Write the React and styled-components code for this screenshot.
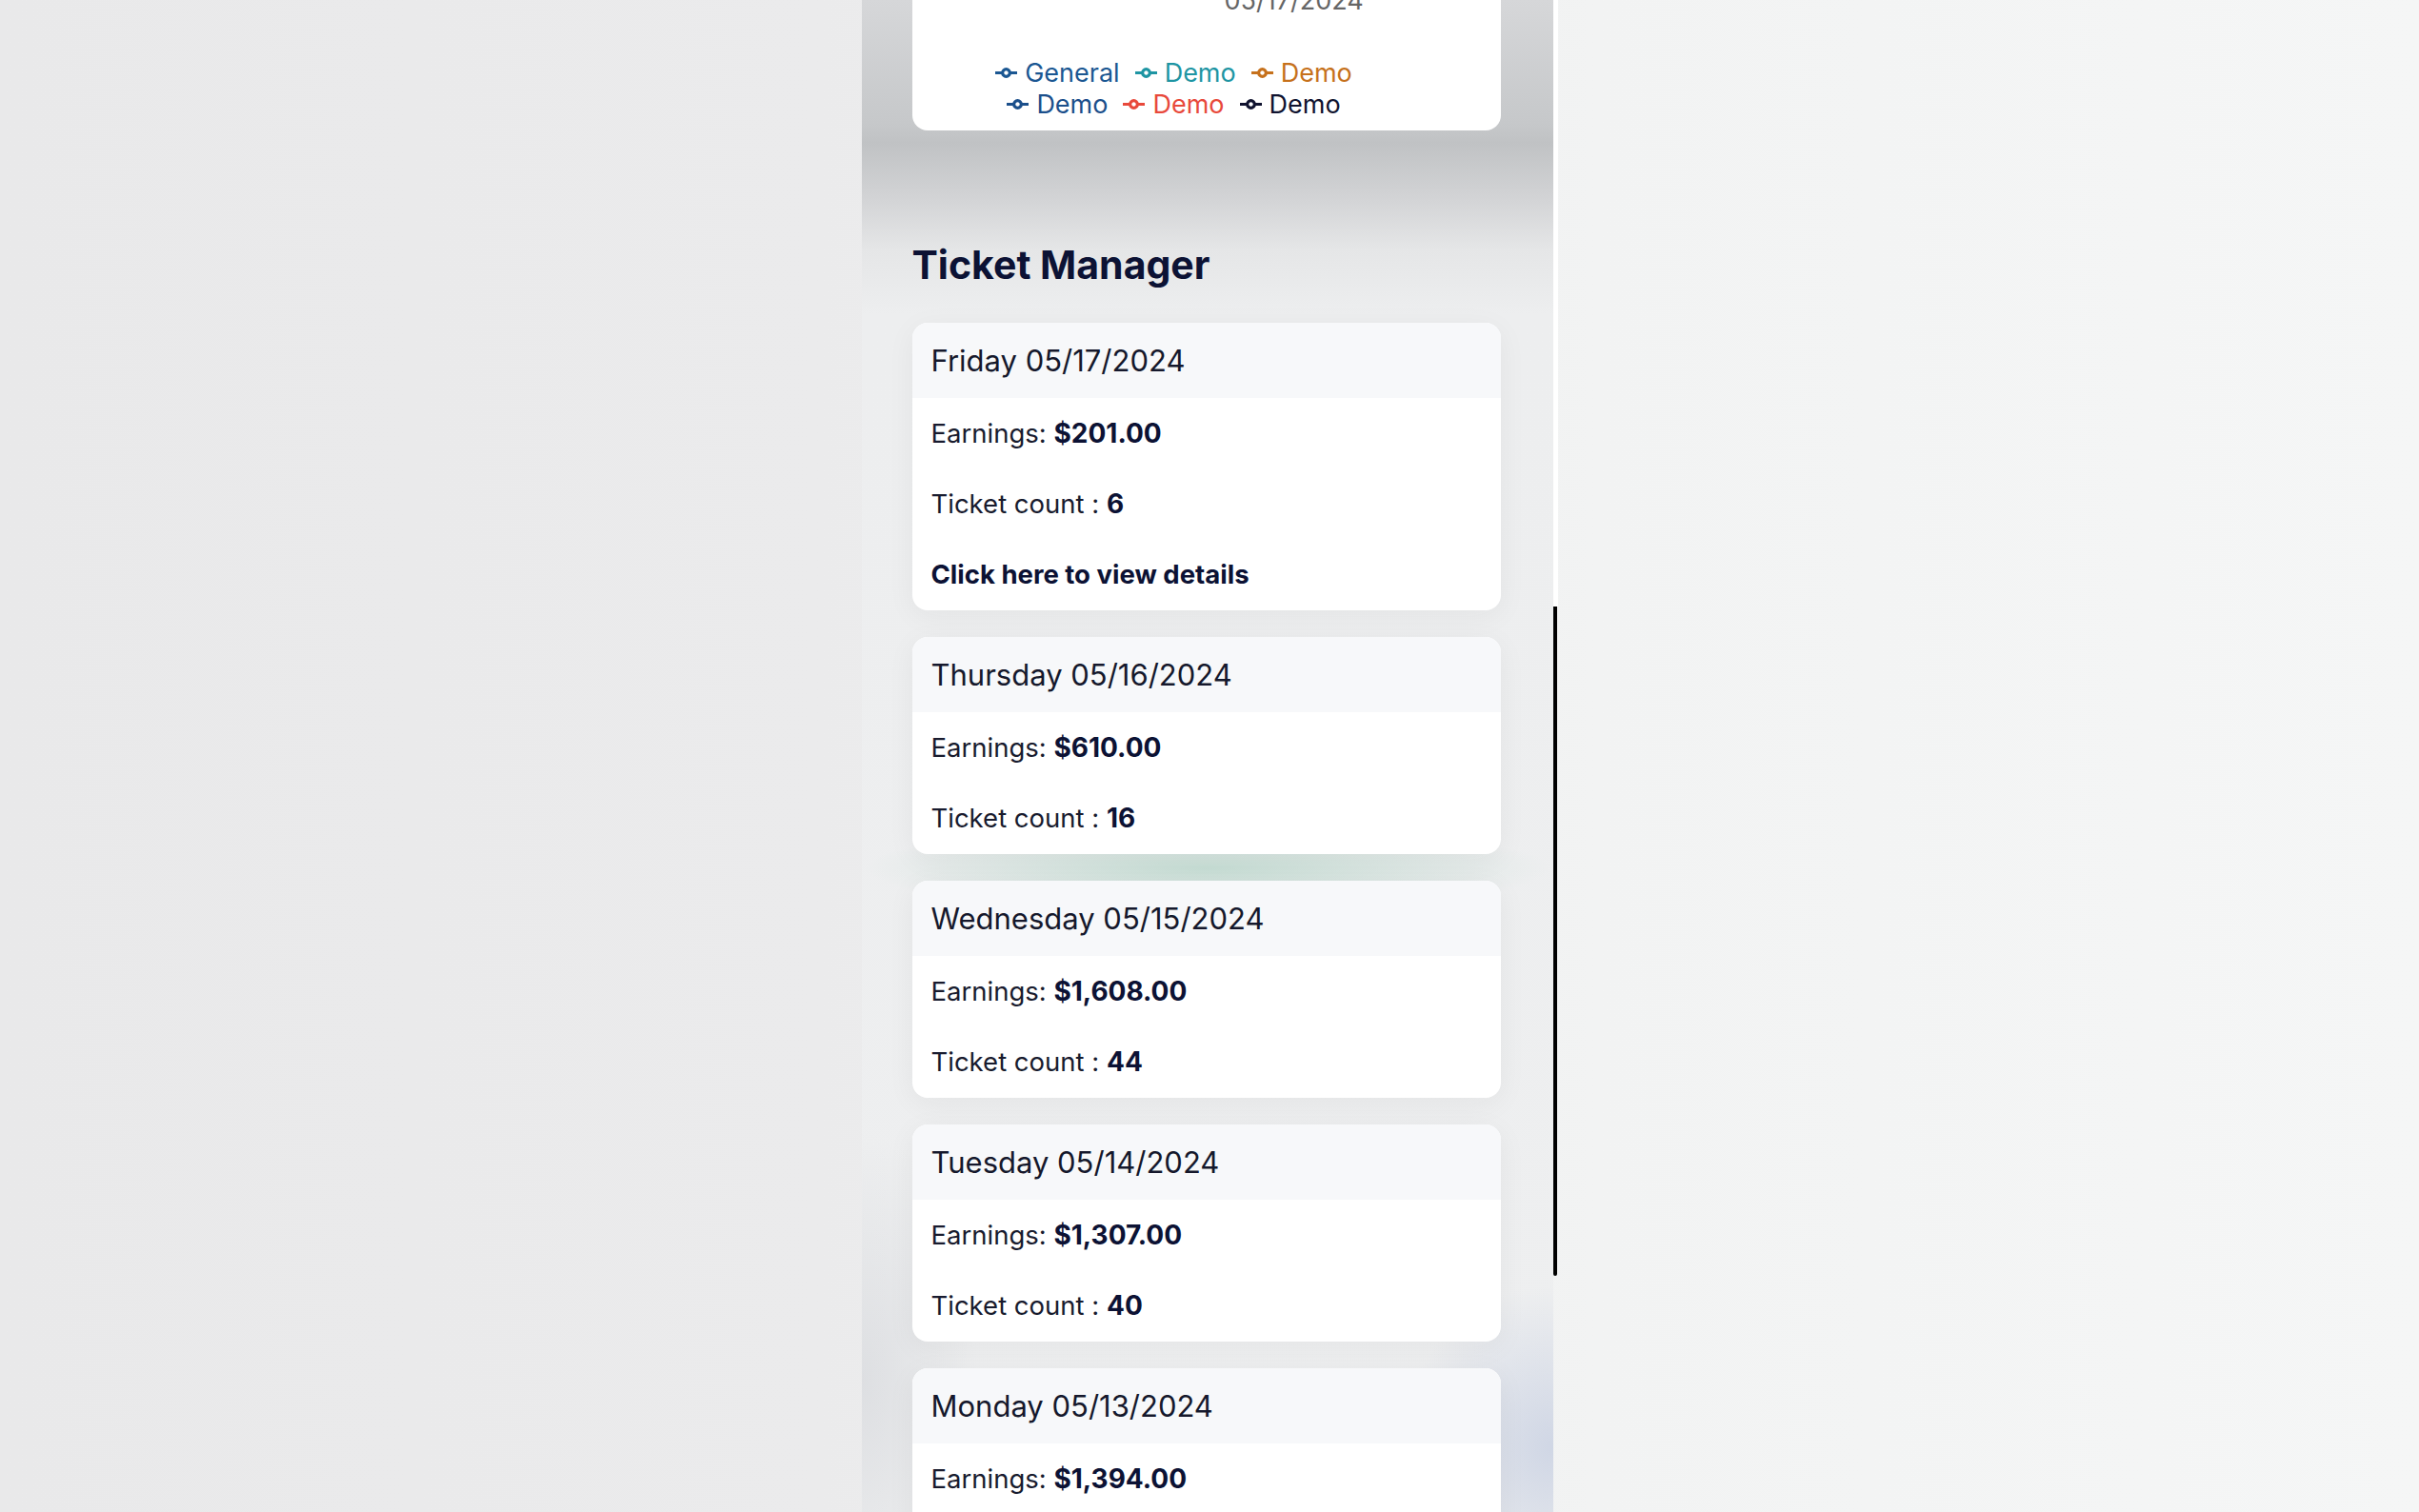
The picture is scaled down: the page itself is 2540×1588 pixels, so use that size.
import React from "react";
import styled, { createGlobalStyle } from "styled-components";

const GlobalStyle = createGlobalStyle`
  html, body {
    margin: 0;
    padding: 0;
    height: 1588px;
    overflow: hidden;
  }
  body {
    font-family: Inter, "Noto Sans", "Liberation Sans", sans-serif;
    background: #ececed;
  }
  * { box-sizing: border-box; }
`;

const Page = styled.div`
  height: 1588px;
  display: flex;
  justify-content: center;
  align-items: flex-start;
  overflow: hidden;
  background: linear-gradient(90deg, #e9e9ea 0%, #ebebec 34%, #f2f3f3 66%, #f5f6f6 100%);
`;

const Phone = styled.div`
  width: 731px;
  display: flex;
  align-items: flex-start;
  height: 1588px;
  overflow: hidden;
`;

const Content = styled.main`
  width: 726px;
  min-height: 1588px;
  flex-shrink: 0;
  display: flex;
  flex-direction: column;
  padding: 0 55px 0 53px;
  background:
    radial-gradient(ellipse 360px 46px at 50% 912px, rgba(186, 216, 204, 0.75), transparent 100%),
    radial-gradient(ellipse 160px 170px at 100% 1520px, rgba(200, 208, 226, 0.8), transparent 100%),
    radial-gradient(ellipse 120px 260px at 0% 1450px, rgba(205, 207, 212, 0.5), transparent 100%),
    linear-gradient(180deg, #d6d7d9 0px, #c6c8ca 130px, #c0c2c4 150px, #d3d4d6 210px, #e5e6e7 262px, #edeeef 330px, #eeeff0 100%);

  & > * {
    flex-shrink: 0;
  }
`;

const ScrollTrack = styled.div`
  width: 5px;
  flex-shrink: 0;
  display: flex;
  flex-direction: column;
`;

const TrackTop = styled.div`
  height: 637px;
  background: #ffffff;
`;

const Thumb = styled.div`
  width: 4px;
  height: 703px;
  background: #000000;
  border-radius: 0 0 2px 2px;
`;

const ChartCard = styled.section`
  background: #ffffff;
  border-radius: 0 0 16px 16px;
  height: 137px;
  display: flex;
  flex-direction: column;
`;

const TickRow = styled.div`
  height: 14px;
  overflow: hidden;
  display: flex;
  align-items: flex-end;
  padding-left: 328px;
`;

const TickLabel = styled.span`
  font-size: 27px;
  line-height: 27px;
  color: #666666;
  white-space: nowrap;
`;

const Legend = styled.ul`
  list-style: none;
  margin: 46px 0 0 65px;
  padding: 0;
  width: 420px;
  display: flex;
  flex-wrap: wrap;
  justify-content: center;
  column-gap: 16px;
`;

const LegendItem = styled.li`
  display: flex;
  align-items: center;
  gap: 8px;
  font-size: 27px;
  line-height: 33px;
  color: ${(p) => p.$color};
`;

const LegendIcon = ({ color }) => (
  <svg width="23" height="23" viewBox="0 0 32 32" aria-hidden="true">
    <path
      d="M0,16h10.67A5.33,5.33,0,1,1,21.33,16H32M21.33,16A5.33,5.33,0,1,1,10.67,16"
      fill="none"
      stroke={color}
      strokeWidth="4.4"
    />
  </svg>
);

const Heading = styled.h2`
  margin: 117px 0 36px;
  font-size: 41px;
  line-height: 49px;
  font-weight: 700;
  color: #0c1234;
`;

const CardList = styled.div`
  display: flex;
  flex-direction: column;
  gap: 28px;
`;

const DayCard = styled.article`
  background: #ffffff;
  border-radius: 16px;
  overflow: hidden;
  flex-shrink: 0;
  box-shadow: 0 6px 30px rgba(30, 35, 45, 0.05);
`;

const DayHeader = styled.header`
  height: 79px;
  line-height: 79px;
  padding: 0 20px;
  background: #f7f8fa;
  font-size: 31px;
  font-weight: 400;
  color: #15182c;
`;

const DayBody = styled.div`
  display: flex;
  flex-direction: column;
  gap: 34px;
  padding: 17px 20px 18px;
`;

const Line = styled.p`
  margin: 0;
  font-size: 27.5px;
  line-height: 40px;
  color: ${(p) => (p.$strong ? "#0c1234" : "#181b2e")};
  font-weight: ${(p) => (p.$strong ? 700 : 400)};
`;

const Value = styled.b`
  font-weight: 700;
  font-size: 28px;
  color: #0c1234;
`;

const legend = [
  { label: "General", color: "#1b5792" },
  { label: "Demo", color: "#1e95a3" },
  { label: "Demo", color: "#c6711c" },
  { label: "Demo", color: "#1b4f8b" },
  { label: "Demo", color: "#e8493b" },
  { label: "Demo", color: "#10132f" },
];

const days = [
  { day: "Friday 05/17/2024", earnings: "$201.00", count: "6", details: true },
  { day: "Thursday 05/16/2024", earnings: "$610.00", count: "16" },
  { day: "Wednesday 05/15/2024", earnings: "$1,608.00", count: "44" },
  { day: "Tuesday 05/14/2024", earnings: "$1,307.00", count: "40" },
  { day: "Monday 05/13/2024", earnings: "$1,394.00", count: "38" },
];

export default function App() {
  return (
    <>
      <GlobalStyle />
      <Page>
        <Phone>
          <Content>
            <ChartCard>
              <TickRow>
                <TickLabel>05/17/2024</TickLabel>
              </TickRow>
              <Legend>
                {legend.map((l, i) => (
                  <LegendItem key={i} $color={l.color}>
                    <LegendIcon color={l.color} />
                    {l.label}
                  </LegendItem>
                ))}
              </Legend>
            </ChartCard>
            <Heading>Ticket Manager</Heading>
            <CardList>
              {days.map((d) => (
                <DayCard key={d.day}>
                  <DayHeader>{d.day}</DayHeader>
                  <DayBody>
                    <Line>
                      Earnings: <Value>{d.earnings}</Value>
                    </Line>
                    <Line>
                      Ticket count : <Value>{d.count}</Value>
                    </Line>
                    {d.details && <Line $strong>Click here to view details</Line>}
                  </DayBody>
                </DayCard>
              ))}
            </CardList>
          </Content>
          <ScrollTrack>
            <TrackTop />
            <Thumb />
          </ScrollTrack>
        </Phone>
      </Page>
    </>
  );
}
